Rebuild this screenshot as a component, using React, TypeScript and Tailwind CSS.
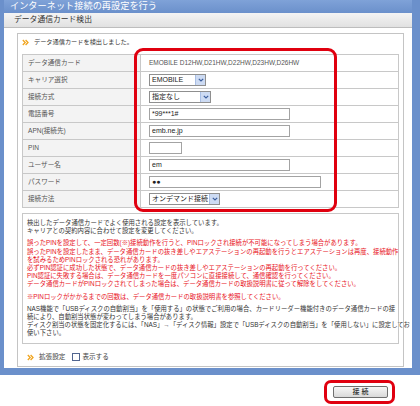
import type { ReactNode } from 'react';

function Chevrons() {
  return (
    <svg width="7" height="7" viewBox="0 0 7 7" className="shrink-0">
      <polyline points="0.8,1 3.2,3.5 0.8,6" fill="none" stroke="#f0a41e" strokeWidth="1.3" />
      <polyline points="3.6,1 6,3.5 3.6,6" fill="none" stroke="#f0a41e" strokeWidth="1.3" />
    </svg>
  );
}

function SelectBox({ value, width }: { value: string; width: string }) {
  return (
    <div className={`flex h-[12px] items-stretch border border-[#8f8f8f] bg-white ${width}`}>
      <span className="flex-1 pl-[2px] text-[7px] leading-[10px] text-[#222]">{value}</span>
      <span className="flex w-[10px] items-center justify-center border-l border-[#a9bfe4] bg-[#cddbf3]">
        <svg width="6" height="4" viewBox="0 0 6 4">
          <polyline points="0.8,0.8 3,3 5.2,0.8" fill="none" stroke="#3c5f9e" strokeWidth="1.2" />
        </svg>
      </span>
    </div>
  );
}

function TextBox({ value, width }: { value: string; width: string }) {
  return (
    <div className={`h-[12px] border border-[#a3a3a3] bg-white pl-[2px] text-[7px] leading-[10px] text-[#222] ${width}`}>
      {value}
    </div>
  );
}

const rows: { label: string; content: ReactNode }[] = [
  {
    label: 'データ通信カード',
    content: <span className="text-[6.5px] text-[#555]">EMOBILE D12HW,D21HW,D22HW,D23HW,D26HW</span>,
  },
  { label: 'キャリア選択', content: <SelectBox value="EMOBILE" width="w-[57px]" /> },
  { label: '接続方式', content: <SelectBox value="指定なし" width="w-[62px]" /> },
  { label: '電話番号', content: <TextBox value="*99***1#" width="w-[141px]" /> },
  { label: 'APN(接続先)', content: <TextBox value="emb.ne.jp" width="w-[141px]" /> },
  { label: 'PIN', content: <TextBox value="" width="w-[33px]" /> },
  { label: 'ユーザー名', content: <TextBox value="em" width="w-[141px]" /> },
  { label: 'パスワード', content: <TextBox value="●●" width="w-[172px]" /> },
  { label: '接続方法', content: <SelectBox value="オンデマンド接続" width="w-[71px]" /> },
];

const redLines = [
  '誤ったPINを設定して、一定回数(※)接続動作を行うと、PINロックされ接続が不可能になってしまう場合があります。',
  '誤ったPINを設定したまま、データ通信カードの抜き差しやエアステーションの再起動を行うとエアステーションは再度、接続動作',
  'を試みるためPINロックされる恐れがあります。',
  '必ずPIN認証に成功した状態で、データ通信カードの抜き差しやエアステーションの再起動を行ってください。',
  'PIN認証に失敗する場合は、データ通信カードを一度パソコンに直接接続して、通信確認を行ってください。',
  'データ通信カードがPINロックされてしまった場合は、データ通信カードの取扱説明書に従って解除をしてください。',
];

const nasLines = [
  'NAS機能で「USBディスクの自動割当」を「使用する」の状態でご利用の場合、カードリーダー機能付きのデータ通信カードの接',
  '続により、自動割当状態が変わってしまう場合があります。',
  'ディスク割当の状態を固定化するには、「NAS」→「ディスク情報」設定で「USBディスクの自動割当」を「使用しない」に設定してお',
  '使い下さい。',
];

export default function App() {
  return (
    <div className="relative h-[406px] w-[420px] overflow-hidden bg-white font-[family-name:Liberation_Sans,Noto_Sans_CJK_JP,sans-serif]">
      <div className="flex h-[375px] flex-col bg-[#6b90cb] pb-[7px] pl-[4px] pr-[8px]">
        <div className="h-[13px] bg-gradient-to-b from-[#7fa2d8] to-[#6b90cb] pl-[6px] text-[9.2px] leading-[12px] text-white">
          インターネット接続の再設定を行う
        </div>

        <div className="flex flex-1 flex-col bg-white">
          <div className="h-[15px] border-b border-[#bdbdbd] bg-gradient-to-b from-[#f4f4f4] to-[#e1e1e1] pl-[10px] text-[7.8px] leading-[14px] text-[#333]">
            データ通信カード検出
          </div>

          <div className="pl-[13px] pr-[8px] pt-[5px]">
            <div className="flex h-[334px] flex-col border border-[#c4c4c4] px-[4px]">
              <div className="flex h-[16px] items-center gap-[4px] text-[6.2px] text-[#333]">
                <Chevrons />
                <span className="pl-[1px]">データ通信カードを検出しました。</span>
              </div>

              <div className="mt-[4px] border-x border-t border-[#c8c8c8]">
                {rows.map((row) => (
                  <div key={row.label} className="flex h-[17px] border-b border-[#c8c8c8]">
                    <div className="flex w-[118px] items-center border-r border-[#c8c8c8] bg-[#f3f3f3] pl-[5px] text-[6.6px] text-[#555]">
                      {row.label}
                    </div>
                    <div className="flex flex-1 items-center pl-[8px]">{row.content}</div>
                  </div>
                ))}
              </div>

              <div className="mt-[5px] h-[131px] border border-[#c8c8c8] pl-[4px] pt-[5px] text-[6.35px] leading-[8.2px] whitespace-nowrap">
                <p className="text-[#333]">
                  検出したデータ通信カードでよく使用される設定を表示しています。
                  <br />
                  キャリアとの契約内容に合わせて設定を変更してください。
                </p>
                <p className="mt-[4px] text-[#e8121c]">
                  {redLines.map((line) => (
                    <span key={line} className="block">
                      {line}
                    </span>
                  ))}
                </p>
                <p className="mt-[4px] text-[#e8121c]">
                  ※PINロックがかかるまでの回数は、データ通信カードの取扱説明書を参照してください。
                </p>
                <p className="mt-[4px] text-[#333]">
                  {nasLines.map((line) => (
                    <span key={line} className="block">
                      {line}
                    </span>
                  ))}
                </p>
              </div>

              <div className="mt-[6px] flex h-[14px] items-center pl-[5px] text-[6.6px] text-[#444]">
                <Chevrons />
                <span className="ml-[5px]">拡張設定</span>
                <span className="ml-[7px] h-[8px] w-[8px] border border-[#51658f] bg-white" />
                <span className="ml-[2px]">表示する</span>
              </div>
            </div>
          </div>
        </div>
      </div>

      <div className="flex justify-end pr-[32px] pt-[11px]">
        <button
          type="button"
          className="h-[12px] w-[55px] rounded-[2px] border border-[#6f6f6f] bg-gradient-to-b from-[#f7f7f7] to-[#d9d9d9] text-[7px] leading-[10px] text-black"
        >
          接 続
        </button>
      </div>

      {/* red annotation outlines */}
      <div className="pointer-events-none absolute left-[134px] top-[48px] h-[164px] w-[203px] rounded-[9px] border-[3px] border-[#e0000f]" />
      <div className="pointer-events-none absolute left-[324px] top-[380px] h-[24px] w-[71px] rounded-[7px] border-[3px] border-[#e0000f]" />
    </div>
  );
}
